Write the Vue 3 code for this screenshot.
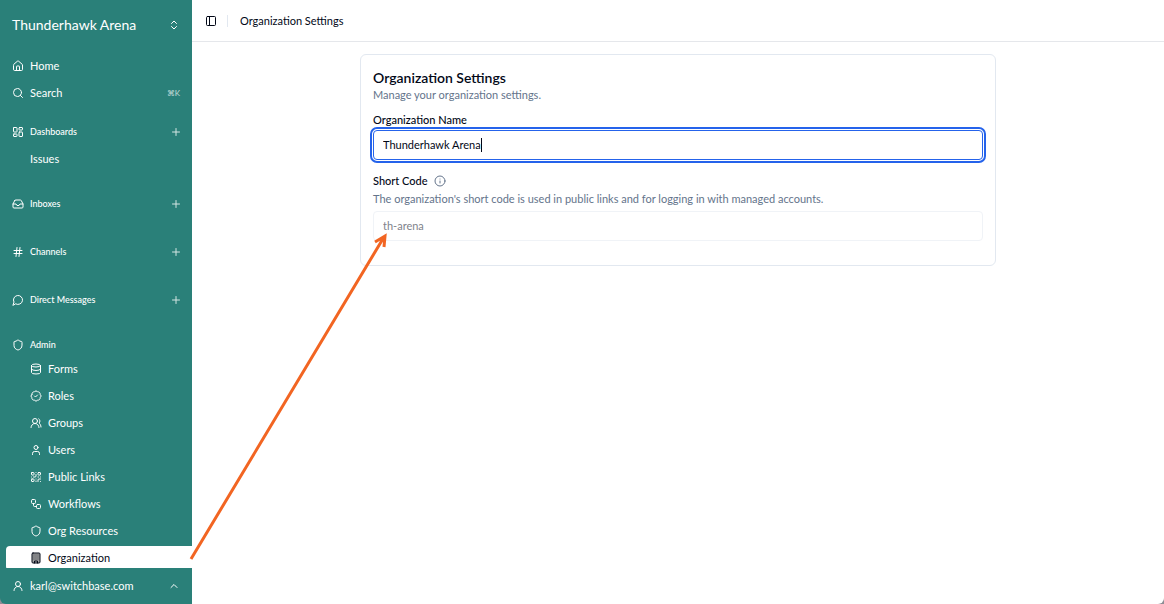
<script setup>
import { ref, onMounted } from 'vue'

const icons = {
  home: '<path d="M15 21v-8a1 1 0 0 0-1-1h-4a1 1 0 0 0-1 1v8"/><path d="M3 10a2 2 0 0 1 .709-1.528l7-5.999a2 2 0 0 1 2.582 0l7 5.999A2 2 0 0 1 21 10v9a2 2 0 0 1-2 2H5a2 2 0 0 1-2-2z"/>',
  search: '<circle cx="11" cy="11" r="8"/><path d="m21 21-4.3-4.3"/>',
  dashboard: '<rect width="7" height="9" x="3" y="3" rx="1"/><rect width="7" height="5" x="14" y="3" rx="1"/><rect width="7" height="9" x="14" y="12" rx="1"/><rect width="7" height="5" x="3" y="16" rx="1"/>',
  inbox: '<path d="M22 12h-6l-2 3h-4l-2-3H2"/><path d="M5.45 5.11 2 12v6a2 2 0 0 0 2 2h16a2 2 0 0 0 2-2v-6l-3.45-6.89A2 2 0 0 0 16.76 4H7.24a2 2 0 0 0-1.79 1.11z"/>',
  hash: '<path d="M4 9h16M4 15h16M10 3 8 21M16 3l-2 18"/>',
  message: '<path d="M7.9 20A9 9 0 1 0 4 16.1L2 22Z"/>',
  shield: '<path d="M20 13c0 5-3.5 7.5-7.66 8.95a1 1 0 0 1-.67-.01C7.5 20.5 4 18 4 13V6a1 1 0 0 1 1-1c2 0 4.5-1.2 6.24-2.72a1.17 1.17 0 0 1 1.52 0C14.51 3.81 17 5 19 5a1 1 0 0 1 1 1z"/>',
  database: '<ellipse cx="12" cy="5" rx="9" ry="3"/><path d="M3 5v14a9 3 0 0 0 18 0V5"/><path d="M3 12a9 3 0 0 0 18 0"/>',
  badge: '<path d="M3.85 8.62a4 4 0 0 1 4.78-4.77 4 4 0 0 1 6.74 0 4 4 0 0 1 4.78 4.78 4 4 0 0 1 0 6.74 4 4 0 0 1-4.77 4.78 4 4 0 0 1-6.75 0 4 4 0 0 1-4.78-4.77 4 4 0 0 1 0-6.76Z"/><path d="m9 12 2 2 4-4"/>',
  users: '<path d="M18 21a8 8 0 0 0-16 0"/><circle cx="10" cy="8" r="5"/><path d="M22 20c0-3.37-2-6.5-4-8a5 5 0 0 0-.45-8.3"/>',
  user: '<path d="M19 21v-2a4 4 0 0 0-4-4H9a4 4 0 0 0-4 4v2"/><circle cx="12" cy="7" r="4"/>',
  account: '<circle cx="12" cy="8" r="5"/><path d="M20 21a8 8 0 0 0-16 0"/>',
  qr: '<rect width="5" height="5" x="3" y="3" rx="1"/><rect width="5" height="5" x="16" y="3" rx="1"/><rect width="5" height="5" x="3" y="16" rx="1"/><path d="M21 16h-3a2 2 0 0 0-2 2v3M21 21v.01M12 7v3a2 2 0 0 1-2 2H7M3 12h.01M12 3h.01M12 16v.01M16 12h1M21 12v.01M12 21v-1"/>',
  workflow: '<rect width="8" height="8" x="3" y="3" rx="2"/><path d="M7 11v4a2 2 0 0 0 2 2h4"/><rect width="8" height="8" x="13" y="13" rx="2"/>',
  building: '<rect width="16" height="20" x="4" y="2" rx="2" fill="#a3a3a3"/><path d="M9 22v-4h6v4M8 6h.01M16 6h.01M12 6h.01M12 10h.01M12 14h.01M16 10h.01M16 14h.01M8 10h.01M8 14h.01"/>',
  plus: '<path d="M5 12h14M12 5v14"/>',
  sort: '<path d="m7 15 5 5 5-5M7 9l5-5 5 5"/>',
  up: '<path d="m18 15-6-6-6 6"/>',
  panel: '<rect width="18" height="18" x="3" y="3" rx="2"/><path d="M9 3v18"/>',
  info: '<circle cx="12" cy="12" r="10"/><path d="M12 16v-4M12 8h.01"/>'
}

const groups = [
  { label: 'Dashboards', icon: 'dashboard', children: ['Issues'] },
  { label: 'Inboxes', icon: 'inbox', children: [] },
  { label: 'Channels', icon: 'hash', children: [] },
  { label: 'Direct Messages', icon: 'message', children: [] }
]

const adminLinks = [
  { label: 'Forms', icon: 'database' },
  { label: 'Roles', icon: 'badge' },
  { label: 'Groups', icon: 'users' },
  { label: 'Users', icon: 'user' },
  { label: 'Public Links', icon: 'qr' },
  { label: 'Workflows', icon: 'workflow' },
  { label: 'Org Resources', icon: 'shield' },
  { label: 'Organization', icon: 'building', active: true }
]

const name = ref('Thunderhawk Arena')
const code = ref('th-arena')
const nameInput = ref(null)

onMounted(() => {
  nameInput.value.focus()
  nameInput.value.setSelectionRange(name.value.length, name.value.length)
})
</script>

<template>
  <div class="app">
    <aside class="sidebar">
      <button class="org" type="button">
        <span>Thunderhawk Arena</span>
        <svg class="icon" viewBox="0 0 24 24" v-html="icons.sort"></svg>
      </button>

      <nav class="nav">
        <div class="links">
          <a class="link" href="#"><svg class="icon" viewBox="0 0 24 24" v-html="icons.home"></svg>Home</a>
          <a class="link" href="#">
            <svg class="icon" viewBox="0 0 24 24" v-html="icons.search"></svg>Search
            <kbd class="kbd">⌘K</kbd>
          </a>
        </div>

        <section v-for="g in groups" :key="g.label" class="group">
          <div class="group-head">
            <svg class="icon" viewBox="0 0 24 24" v-html="icons[g.icon]"></svg>
            <span>{{ g.label }}</span>
            <button class="add" type="button" :aria-label="'Add to ' + g.label">
              <svg class="icon" viewBox="0 0 24 24" v-html="icons.plus"></svg>
            </button>
          </div>
          <a v-for="c in g.children" :key="c" class="link child" href="#">{{ c }}</a>
        </section>

        <section class="admin">
          <div class="group-head">
            <svg class="icon" viewBox="0 0 24 24" v-html="icons.shield"></svg>
            <span>Admin</span>
          </div>
          <div class="links">
            <a v-for="l in adminLinks" :key="l.label" class="link child" :class="{ active: l.active }" href="#">
              <svg class="icon" viewBox="0 0 24 24" v-html="icons[l.icon]"></svg>{{ l.label }}
            </a>
          </div>
        </section>
      </nav>

      <button class="account" type="button">
        <svg class="icon" viewBox="0 0 24 24" v-html="icons.account"></svg>
        <span>karl@switchbase.com</span>
        <svg class="icon end" viewBox="0 0 24 24" v-html="icons.up"></svg>
      </button>
    </aside>

    <main class="main">
      <header class="topbar">
        <button class="toggle" type="button" aria-label="Toggle sidebar">
          <svg class="icon" viewBox="0 0 24 24" v-html="icons.panel"></svg>
        </button>
        <span class="divider"></span>
        <span>Organization Settings</span>
      </header>

      <form class="card" @submit.prevent>
        <h1>Organization Settings</h1>
        <p class="sub">Manage your organization settings.</p>

        <label class="label" for="org-name">Organization Name</label>
        <div class="field">
          <input id="org-name" ref="nameInput" v-model="name" class="input" type="text" />
          <span class="caret" :data-value="name" aria-hidden="true"></span>
        </div>

        <div class="label-row">
          <label class="label" for="org-code">Short Code</label>
          <svg class="icon" viewBox="0 0 24 24" v-html="icons.info"></svg>
        </div>
        <p class="help">The organization's short code is used in public links and for logging in with managed accounts.</p>
        <input id="org-code" v-model="code" class="input muted" type="text" disabled />
      </form>
    </main>

    <svg class="arrow" width="210" height="340" viewBox="0 0 210 340" aria-hidden="true">
      <path d="M5 334 198 12M189 17 199 11 198 22" />
    </svg>
  </div>
</template>

<style>
body {
  margin: 0;
  background: #8d8d95;
}
</style>

<style scoped>
.app {
  position: relative;
  display: flex;
  height: 100vh;
  overflow: hidden;
  font-family: Lato, "Open Sans", "Noto Sans", sans-serif;
  font-size: 11px;
  line-height: 16px;
  color: #020817;
}
button,
input {
  font: inherit;
  color: inherit;
  box-sizing: border-box;
}
button {
  border: 0;
  padding: 0;
  background: none;
  display: flex;
  align-items: center;
}
.icon {
  width: 12px;
  height: 12px;
  flex: none;
  fill: none;
  stroke: currentColor;
  stroke-width: 2;
  stroke-linecap: round;
  stroke-linejoin: round;
}
.sidebar {
  display: flex;
  flex-direction: column;
  width: 192px;
  flex: none;
  color: #fff;
  background: #2a8079;
  border-bottom-left-radius: 6px;
}
.org {
  justify-content: space-between;
  height: 50px;
  flex: none;
  padding: 0 12px;
  font-size: 14px;
}
.nav {
  flex: 1;
  min-height: 0;
  overflow: hidden;
  padding: 4px 0 0 6px;
}
.links {
  display: flex;
  flex-direction: column;
  gap: 3px;
}
.link {
  display: flex;
  align-items: center;
  gap: 6px;
  height: 24px;
  padding: 0 12px 0 6px;
  color: inherit;
  text-decoration: none;
}
.child {
  padding-left: 24px;
}
.active {
  background: #fff;
  color: #020817;
  border-radius: 4px 0 0 4px;
}
.kbd {
  margin-left: auto;
  font-family: inherit;
  font-size: 8px;
  opacity: 0.7;
}
.group {
  padding-bottom: 20px;
}
.links + .group {
  padding-top: 14px;
}
.group-head {
  display: flex;
  align-items: center;
  gap: 6px;
  height: 26px;
  margin-bottom: 2px;
  padding: 0 10px 0 6px;
  font-size: 9px;
  font-weight: 500;
}
.add {
  margin-left: auto;
  opacity: 0.8;
}
.admin {
  margin-top: -3px;
}
.admin .group-head {
  margin-bottom: -1px;
}
.account {
  height: 36px;
  flex: none;
  padding: 0 12px;
  gap: 6px;
}
.end {
  margin-left: auto;
}
.main {
  flex: 1;
  min-width: 0;
  background: #fff;
  border-bottom-right-radius: 6px;
}
.topbar {
  display: flex;
  align-items: center;
  height: 41px;
  padding: 0 13px;
  border-bottom: 1px solid #e5e7eb;
}
.divider {
  width: 1px;
  height: 12px;
  margin: 0 12px 0 10px;
  background: #e2e8f0;
}
.card {
  box-sizing: border-box;
  max-width: 636px;
  margin: 12px auto;
  padding: 14px 12px 24px;
  border: 1px solid #e2e8f0;
  border-radius: 6px;
}
h1 {
  margin: 0;
  font-size: 14px;
  line-height: 18px;
  font-weight: 600;
}
p {
  margin: 0;
  color: #64748b;
}
.label {
  display: block;
  font-weight: 500;
}
.sub {
  margin-bottom: 9px;
}
.field {
  position: relative;
}
.input {
  display: block;
  width: 100%;
  height: 30px;
  margin-top: 2px;
  padding: 0 9px 2px;
  border: 1px solid #e2e8f0;
  border-radius: 4px;
  background: #fff;
}
.input:focus {
  border-color: #2563eb;
  outline: 2px solid #2563eb;
  outline-offset: 1px;
  caret-color: transparent;
}
.input.muted {
  color: #80838b;
  border-color: #f0f3f7;
}
.caret {
  position: absolute;
  left: 10px;
  top: 8px;
  height: 14px;
  line-height: 14px;
  white-space: pre;
  color: transparent;
  border-right: 1px solid #020817;
  pointer-events: none;
  visibility: hidden;
}
.caret::before {
  content: attr(data-value);
}
.input:focus + .caret {
  visibility: visible;
}
.label-row {
  display: flex;
  align-items: center;
  gap: 6px;
  margin-top: 13px;
}
.label-row .icon {
  color: #64748b;
}
.help {
  margin: 2px 0 4px;
}
.arrow {
  position: absolute;
  left: 186px;
  top: 225px;
  fill: none;
  stroke: #f26522;
  stroke-width: 3;
  pointer-events: none;
}
</style>
